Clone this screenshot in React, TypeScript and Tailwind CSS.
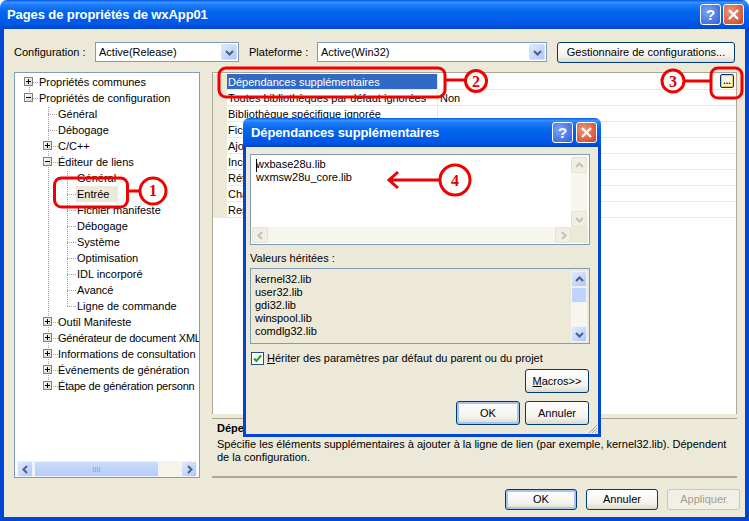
import type { ReactNode } from 'react';

const treeRows: { label: string; level: number; box?: '+' | '-'; selected?: boolean; tight?: boolean }[] = [
  { label: 'Propriétés communes', level: 0, box: '+' },
  { label: 'Propriétés de configuration', level: 0, box: '-' },
  { label: 'Général', level: 1 },
  { label: 'Débogage', level: 1 },
  { label: 'C/C++', level: 1, box: '+' },
  { label: 'Éditeur de liens', level: 1, box: '-' },
  { label: 'Général', level: 2 },
  { label: 'Entrée', level: 2, selected: true },
  { label: 'Fichier manifeste', level: 2 },
  { label: 'Débogage', level: 2 },
  { label: 'Système', level: 2 },
  { label: 'Optimisation', level: 2 },
  { label: 'IDL incorporé', level: 2 },
  { label: 'Avancé', level: 2 },
  { label: 'Ligne de commande', level: 2 },
  { label: 'Outil Manifeste', level: 1, box: '+' },
  { label: 'Générateur de document XML', level: 1, box: '+', tight: true },
  { label: 'Informations de consultation', level: 1, box: '+' },
  { label: 'Événements de génération', level: 1, box: '+' },
  { label: 'Étape de génération personn', level: 1, box: '+', tight: true },
];

const gridRows: [string, string][] = [
  ['Dépendances supplémentaires', ''],
  ['Toutes bibliothèques par défaut ignorées', 'Non'],
  ['Bibliothèque spécifique ignorée', ''],
  ['Fichier de définition de module', ''],
  ['Ajouter le module à l\'assembly', ''],
  ['Incorporer l\'IDL', ''],
  ['Référence de bibliothèque', ''],
  ['Charger les DLL différées', ''],
  ['Ressource de l\'assembly', ''],
];

function Chevron({ dir, color = '#4d6185' }: { dir: 'up' | 'down' | 'left' | 'right'; color?: string }) {
  const d = {
    up: 'M1 6 L4.5 2.5 L8 6',
    down: 'M1 3 L4.5 6.5 L8 3',
    left: 'M6 1 L2.5 4.5 L6 8',
    right: 'M3 1 L6.5 4.5 L3 8',
  }[dir];
  return (
    <svg width="9" height="9" viewBox="0 0 9 9" fill="none">
      <path d={d} stroke={color} strokeWidth="2" />
    </svg>
  );
}

function ScrollBtn({ dir, off }: { dir: 'up' | 'down' | 'left' | 'right'; off?: boolean }) {
  return (
    <div
      className={`w-4 h-4 shrink-0 flex items-center justify-center rounded-[2px] border ${
        off ? 'border-[#e4e2d6] bg-[#f1efe4]' : 'border-[#eef2fd] bg-[linear-gradient(135deg,#e1eafe,#aec8f7)]'
      }`}
    >
      <Chevron dir={dir} color={off ? '#c4c2b4' : '#4d6185'} />
    </div>
  );
}

function XpButton({ children, main, off, className = '' }: { children: ReactNode; main?: boolean; off?: boolean; className?: string }) {
  return (
    <div
      className={`flex items-center justify-center rounded-[3px] border text-[11px] ${
        off
          ? 'border-[#c9c7ba] bg-[#f2f0e6] text-[#a19e8f]'
          : 'border-[#003c74] bg-[linear-gradient(180deg,#ffffff,#f3f2ec_70%,#dcd8ca)] text-black'
      } ${main ? 'shadow-[inset_0_0_0_2px_#a9c4ee]' : ''} ${className}`}
    >
      {children}
    </div>
  );
}

function Combo({ value, className }: { value: string; className: string }) {
  return (
    <div className={`h-5 flex items-center bg-white border border-[#7f9db9] pl-[3px] pr-[1px] ${className}`}>
      <span className="flex-1 text-[11px]">{value}</span>
      <div className="w-[16px] h-[16px] flex items-center justify-center rounded-[2px] bg-[linear-gradient(135deg,#e1eafe,#aec8f7)] border border-[#d5e0f8]">
        <Chevron dir="down" />
      </div>
    </div>
  );
}

function CaptionButtons({ gap }: { gap: string }) {
  return (
    <div className={`flex ${gap}`}>
      <div className="w-[21px] h-[21px] flex items-center justify-center rounded-[3px] border border-white bg-[radial-gradient(circle_at_35%_35%,#7ea4f4,#2a5edb)] text-white text-[15px] leading-none font-bold">
        ?
      </div>
      <div className="w-[21px] h-[21px] flex items-center justify-center rounded-[3px] border border-white bg-[radial-gradient(circle_at_35%_35%,#e9987f,#d1401b)]">
        <svg width="13" height="13" viewBox="0 0 13 13">
          <path d="M2 2 L11 11 M11 2 L2 11" stroke="#fff" strokeWidth="2.4" />
        </svg>
      </div>
    </div>
  );
}

function TreePanel() {
  return (
    <div className="relative w-[186px] h-full border border-[#7f9db9] bg-white flex flex-col overflow-hidden">
      <svg className="absolute left-0 top-0" width="100" height="330" fill="none" stroke="#a0a0a0" strokeDasharray="1 1">
        <path d="M14.5 10 V26 M33.5 34 V314 M52.5 98 V234" />
        <path d="M18 9.5 H24 M18 25.5 H24 M33 41.5 H43 M33 57.5 H43 M38 73.5 H43 M38 89.5 H43" />
        <path d="M52 105.5 H62 M52 121.5 H62 M52 137.5 H62 M52 153.5 H62 M52 169.5 H62 M52 185.5 H62 M52 201.5 H62 M52 217.5 H62 M52 233.5 H62" />
        <path d="M38 249.5 H43 M38 265.5 H43 M38 281.5 H43 M38 297.5 H43 M38 313.5 H43" />
      </svg>
      <div className="relative flex-1 pt-[1px]">
        {treeRows.map((r, i) => (
          <div key={i} className={`relative h-4 flex items-center whitespace-nowrap text-[11px] ${r.tight ? 'tracking-[-0.2px]' : ''}`}>
            {r.box && (
              <div
                className={`absolute top-[3px] w-[9px] h-[9px] border border-[#808080] bg-[linear-gradient(135deg,#ffffff,#d8d4c8)] flex items-center justify-center ${
                  r.level === 0 ? 'left-[9px]' : 'left-[28px]'
                }`}
              >
                <div className="relative w-[5px] h-[1px] bg-black">
                  {r.box === '+' && <div className="absolute left-[2px] top-[-2px] w-[1px] h-[5px] bg-black" />}
                </div>
              </div>
            )}
            <span
              className={`px-[1px] leading-4 ${r.level === 0 ? 'ml-[23px]' : r.level === 1 ? 'ml-[42px]' : 'ml-[61px]'} ${
                r.selected ? 'bg-[#ece9d8] pr-[9px]' : ''
              }`}
            >
              {r.label}
            </span>
          </div>
        ))}
      </div>
      <div className="h-4 mx-[2px] mb-[0px] flex items-center bg-[#f5f4ea]">
        <ScrollBtn dir="left" />
        <div className="ml-[1px] w-[125px] h-4 rounded-[2px] border border-[#eef2fd] bg-[linear-gradient(180deg,#cbdbfb,#b4cdf8)] flex items-center justify-center text-[#7f9ad0] text-[7px] leading-none">
          IIII
        </div>
        <div className="flex-1" />
        <ScrollBtn dir="right" />
      </div>
    </div>
  );
}

function PropertyGrid() {
  return (
    <div className="relative h-[343px] bg-white border-t border-l border-r border-[#aca899] overflow-hidden">
      <div className="pt-[1px]">
        {gridRows.map(([name, value], i) => (
          <div key={i} className="h-4 flex text-[11px] leading-[16px] border-b border-[#ece9d8]">
            <div className="w-[14px] shrink-0 bg-[#ece9d8]" />
            <div
              className={`w-[210px] shrink-0 pl-[1px] whitespace-nowrap overflow-hidden ${
                i === 0 ? 'bg-[#316ac5] text-white' : ''
              }`}
            >
              {name}
            </div>
            <div className="flex-1 pl-[2px] border-l border-[#ece9d8]">{value}</div>
            {i === 0 && (
              <div className="mr-[2px] w-[14px] h-[14px] rounded-[2px] border border-[#003c74] bg-[#fdf3d8] shadow-[inset_0_0_0_1px_#f6c55b] text-[9px] leading-[13px] text-center font-bold">
                ...
              </div>
            )}
          </div>
        ))}
      </div>
    </div>
  );
}

function Dialog() {
  return (
    <div className="absolute left-[243px] top-[118px] w-[358px] h-[319px] flex flex-col rounded-t-[6px] overflow-hidden">
      <div className="h-[29px] shrink-0 flex items-center justify-between pl-[8px] pr-[4px] bg-[linear-gradient(180deg,#0058e6,#3a93ff_8%,#1f7dfb_16%,#0367ec_40%,#0055e5_85%,#0046c8)]">
        <span className="text-white text-[13px] font-bold tracking-[-0.12px]">Dépendances supplémentaires</span>
        <CaptionButtons gap="gap-[3px]" />
      </div>
      <div className="relative flex-1 flex flex-col bg-[#ece9d8] border-x-[3px] border-b-[3px] border-[#0046d5] pl-[4px] pr-[8px] pt-[7px]">
        <div className="h-[91px] border border-[#7f9db9] bg-white p-[1px] flex flex-col">
          <div className="flex-1 flex min-h-0">
            <div className="relative flex-1 pl-[4px] pt-[2px] text-[11px] leading-[13px]">
              <div className="absolute left-[4px] top-[3px] w-[1px] h-[13px] bg-black" />
              <div>wxbase28u.lib</div>
              <div>wxmsw28u_core.lib</div>
            </div>
            <div className="w-4 mr-[1px] mt-[1px] flex flex-col justify-between bg-[#f7f6ee]">
              <ScrollBtn dir="up" off />
              <ScrollBtn dir="down" off />
            </div>
          </div>
          <div className="h-4 flex">
            <div className="flex-1 flex justify-between bg-[#f7f6ee]">
              <ScrollBtn dir="left" off />
              <ScrollBtn dir="right" off />
            </div>
            <div className="w-[17px] bg-[#ece9d8]" />
          </div>
        </div>
        <div className="mt-[5px] h-4 text-[11px] leading-4">Valeurs héritées :</div>
        <div className="mt-[2px] h-[76px] border border-[#7f9db9] bg-[#ece9d8] flex pr-[2px] pt-[2px] pb-[1px]">
          <div className="flex-1 pl-[4px] pt-[2px] text-[11px] leading-[13px]">
            <div>kernel32.lib</div>
            <div>user32.lib</div>
            <div>gdi32.lib</div>
            <div>winspool.lib</div>
            <div>comdlg32.lib</div>
          </div>
          <div className="w-4 flex flex-col bg-[#f7f6ee]">
            <ScrollBtn dir="up" />
            <div className="h-[16px] rounded-[2px] border border-[#eef2fd] bg-[#c0d3f9]" />
            <div className="flex-1" />
            <ScrollBtn dir="down" />
          </div>
        </div>
        <div className="mt-[7px] h-[15px] flex items-center gap-[3px] text-[11px]">
          <div className="ml-[1px] w-[13px] h-[13px] border border-[#1c5180] bg-white flex items-center justify-center">
            <svg width="9" height="9" viewBox="0 0 9 9" fill="none">
              <path d="M1 4.5 L3.5 7 L8 1.5" stroke="#21a121" strokeWidth="2" />
            </svg>
          </div>
          <span>
            <span className="underline">H</span>ériter des paramètres par défaut du parent ou du projet
          </span>
        </div>
        <div className="mt-[3px] flex justify-end pr-[1px]">
          <XpButton className="w-[64px] h-6">
            <span>
              <span className="underline">M</span>acros&gt;&gt;
            </span>
          </XpButton>
        </div>
        <div className="mt-[8px] flex justify-end gap-[5px] pr-[1px]">
          <XpButton main className="w-[64px] h-6">OK</XpButton>
          <XpButton className="w-[64px] h-6">Annuler</XpButton>
        </div>
        <svg className="absolute right-0 bottom-0" width="11" height="11" stroke="#aca899" fill="none">
          <path d="M10 2 L2 10 M10 5 L5 10 M10 8 L8 10" />
        </svg>
      </div>
    </div>
  );
}

function Annotations() {
  const badge = 'font-["Liberation_Serif",serif] font-bold';
  return (
    <svg className="absolute left-0 top-0 pointer-events-none" width="749" height="521" fill="none" stroke="#f00000" strokeWidth="3">
      <rect x="54.5" y="178" width="73" height="29" rx="7" />
      <path d="M128 191 H140" />
      <circle cx="153" cy="191" r="13" fill="#fff" />
      <rect x="219" y="68" width="226" height="29" rx="7" />
      <path d="M445 80 H466" />
      <circle cx="476" cy="81" r="10.5" fill="#fff" />
      <path d="M685 81 H711" />
      <rect x="711" y="68" width="31" height="30" rx="7" />
      <circle cx="673" cy="81" r="11" fill="#fff" />
      <path d="M390 180 H440 M398 172 L389 180 L398 188" />
      <circle cx="455" cy="180" r="15" fill="#fff" />
      <g fill="#e00000" stroke="none" fontSize="16" textAnchor="middle" className={badge}>
        <text x="153" y="196">1</text>
        <text x="476" y="87">2</text>
        <text x="673" y="87">3</text>
        <text x="455" y="186">4</text>
      </g>
    </svg>
  );
}

export default function App() {
  return (
    <div className="relative w-[749px] h-[521px] overflow-hidden bg-white text-black font-['Liberation_Sans',sans-serif] flex flex-col">
      <div className="h-[29px] shrink-0 flex items-center justify-between pl-[7px] pr-[5px] rounded-t-[7px] bg-[linear-gradient(180deg,#0058e6,#3a93ff_8%,#1f7dfb_16%,#0367ec_40%,#0055e5_85%,#0046c8)]">
        <span className="text-white text-[13px] font-bold tracking-[-0.1px]">Pages de propriétés de wxApp01</span>
        <CaptionButtons gap="gap-[2px]" />
      </div>
      <div className="flex-1 flex flex-col bg-[#ece9d8] border-x-4 border-b-4 border-[#0046d5] pl-[10px] pr-[5px]">
        <div className="mt-[13px] h-5 flex items-center text-[11px]">
          <span className="w-[81px]">Configuration :</span>
          <Combo value="Active(Release)" className="w-[144px]" />
          <span className="ml-[10px] w-[68px]">Plateforme :</span>
          <Combo value="Active(Win32)" className="w-[230px]" />
          <XpButton className="ml-[10px] w-[178px] h-[21px]">Gestionnaire de configurations...</XpButton>
        </div>
        <div className="mt-[10px] h-[406px] flex gap-[12px]">
          <TreePanel />
          <div className="w-[525px] flex flex-col gap-[4px]">
            <PropertyGrid />
            <div className="h-[60px] border-t border-[#aca899] border-b-2 border-b-[#aca899] pl-[5px] pt-[2px] text-[11px] leading-[13px]">
              <div className="font-bold mb-[3px] mt-[1px]">Dépendances supplémentaires</div>
              <div>
                Spécifie les éléments supplémentaires à ajouter à la ligne de lien (par exemple, kernel32.lib). Dépendent
                <br />
                de la configuration.
              </div>
            </div>
          </div>
        </div>
        <div className="mt-[11px] flex justify-end gap-[9px]">
          <XpButton main className="w-[72px] h-[21px]">OK</XpButton>
          <XpButton className="w-[72px] h-[21px]">Annuler</XpButton>
          <XpButton off className="w-[73px] h-[21px]">Appliquer</XpButton>
        </div>
      </div>
      <Dialog />
      <Annotations />
    </div>
  );
}
